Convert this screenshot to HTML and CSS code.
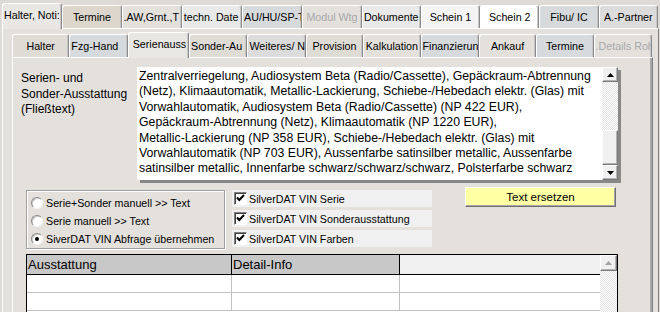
FILE: index.html
```html
<!DOCTYPE html>
<html lang="de">
<head>
<meta charset="UTF-8" />
<title>Fahrzeug - Serienausstattung</title>
<link rel="stylesheet" href="styles.css">
</head>
<body>
<div class="window">
    <div class="tabs tabs-main">
        <div class="tab active left">Halter, Noti:</div>
        <div class="tab tan">Termine</div>
        <div class="tab left">.AW,Grnt.,T</div>
        <div class="tab light left">techn. Date</div>
        <div class="tab blue left">AU/HU/SP-T</div>
        <div class="tab off">Modul Wtg</div>
        <div class="tab light">Dokumente</div>
        <div class="tab lighter">Schein 1</div>
        <div class="tab white">Schein 2</div>
        <div class="tab blue">Fibu/ IC</div>
        <div class="tab grey">A.-Partner</div>
    </div>
    <div class="page page-main">
        <div class="tabs tabs-sub">
            <div class="tab warm">Halter</div>
            <div class="tab blue left">Fzg-Hand</div>
            <div class="tab active left">Serienauss</div>
            <div class="tab warm left">Sonder-Au</div>
            <div class="tab grey left">Weiteres/ N</div>
            <div class="tab warm">Provision</div>
            <div class="tab">Kalkulation</div>
            <div class="tab blue left">Finanzierun</div>
            <div class="tab">Ankauf</div>
            <div class="tab blue">Termine</div>
            <div class="tab off left">.Details Roh</div>
        </div>
        <div class="page page-sub">
            <div class="memo-row">
                <div class="memo-label">Serien- und<br>Sonder-Ausstattung<br>(Fließtext)</div>
                <div class="memo">
                    <div class="memo-text">
                        Zentralverriegelung, Audiosystem Beta (Radio/Cassette), Gepäckraum-Abtrennung<br>
                        (Netz), Klimaautomatik, Metallic-Lackierung, Schiebe-/Hebedach elektr. (Glas) mit<br>
                        Vorwahlautomatik, Audiosystem Beta (Radio/Cassette) (NP 422 EUR),<br>
                        Gepäckraum-Abtrennung (Netz), Klimaautomatik (NP 1220 EUR),<br>
                        Metallic-Lackierung (NP 358 EUR), Schiebe-/Hebedach elektr. (Glas) mit<br>
                        Vorwahlautomatik (NP 703 EUR), Aussenfarbe satinsilber metallic, Aussenfarbe<br>
                        satinsilber metallic, Innenfarbe schwarz/schwarz/schwarz, Polsterfarbe schwarz
                    </div>
                    <div class="vscroll">
                        <div class="sb-btn"><svg width="7" height="4" viewBox="0 0 7 4"><polygon points="0,4 7,4 3.5,0" fill="#000"/></svg></div>
                        <div class="sb-track"></div>
                        <div class="sb-thumb"></div>
                        <div class="sb-btn"><svg width="7" height="4" viewBox="0 0 7 4"><polygon points="0,0 7,0 3.5,4" fill="#000"/></svg></div>
                    </div>
                </div>
            </div>

            <div class="options-row">
                <div class="radio-group">
                    <div class="radio"><span class="radio-circle"></span>Serie+Sonder manuell &gt;&gt; Text</div>
                    <div class="radio"><span class="radio-circle"></span>Serie manuell &gt;&gt; Text</div>
                    <div class="radio"><span class="radio-circle checked"></span>SiverDAT VIN Abfrage übernehmen</div>
                </div>
                <div class="checks">
                    <div class="check"><span class="check-box"><svg width="9" height="9" viewBox="0 0 9 9"><polyline points="1,3.5 3.3,6 8,1" fill="none" stroke="#000" stroke-width="2"/></svg></span>SilverDAT VIN Serie</div>
                    <div class="check"><span class="check-box"><svg width="9" height="9" viewBox="0 0 9 9"><polyline points="1,3.5 3.3,6 8,1" fill="none" stroke="#000" stroke-width="2"/></svg></span>SilverDAT VIN Sonderausstattung</div>
                    <div class="check"><span class="check-box"><svg width="9" height="9" viewBox="0 0 9 9"><polyline points="1,3.5 3.3,6 8,1" fill="none" stroke="#000" stroke-width="2"/></svg></span>SilverDAT VIN Farben</div>
                </div>
                <button class="btn-replace">Text ersetzen</button>
            </div>

            <div class="grid">
                <div class="grid-body">
                    <div class="grid-row grid-head">
                        <div class="cell c1">Ausstattung</div>
                        <div class="cell c2">Detail-Info</div>
                        <div class="cell c3"></div>
                    </div>
                    <div class="grid-row">
                        <div class="cell c1"></div>
                        <div class="cell c2"></div>
                        <div class="cell c3"></div>
                    </div>
                    <div class="grid-row">
                        <div class="cell c1"></div>
                        <div class="cell c2"></div>
                        <div class="cell c3"></div>
                    </div>
                </div>
                <div class="vscroll grid-scroll">
                    <div class="sb-btn"><svg width="7" height="4" viewBox="0 0 7 4"><polygon points="0,4 7,4 3.5,0" fill="#a0a0a0"/></svg></div>
                    <div class="sb-track"></div>
                </div>
            </div>
        </div>
    </div>
</div>
</body>
</html>
```

FILE: styles.css
```css
* {
    box-sizing: border-box;
}
html, body {
    margin: 0;
    height: 100%;
    overflow: hidden;
}
body {
    background: #dedbd6;
    font-family: "Liberation Sans", Arial, sans-serif;
    font-size: 10.7px;
    color: #000;
}
.window {
    width: 660px;
    height: 312px;
    padding: 3px 0 0 2px;
    overflow: hidden;
}

/* tab strips */
.tabs {
    display: flex;
    align-items: flex-end;
    height: 25px;
}
.tabs-main {
    width: 656px;
}
.tabs-main .tab {
    padding-bottom: 1px;
}
.tabs-sub {
    width: 640px;
}
.tab {
    flex: 1 1 0;
    min-width: 0;
    height: 23px;
    display: flex;
    align-items: center;
    justify-content: center;
    white-space: nowrap;
    overflow: hidden;
    background: #e4e1dd;
    border: 1px solid #fff;
    border-bottom: 0;
    border-right-color: #8a8a8a;
    border-radius: 3px 3px 0 0;
    box-shadow: inset -1px 0 #c6c6c6;
}
.tab.left {
    justify-content: flex-start;
    padding-left: 1px;
}
.tab.active {
    position: relative;
    z-index: 1;
    height: 26px;
    margin-bottom: -1px;
    background: #e9e7e4;
    padding-bottom: 3px;
}
.tabs-sub .tab.active {
    padding-left: 4px;
    padding-bottom: 4px;
}
.tab.tan { background: #ddd6cc; }
.tab.light { background: #e9e9e9; }
.tab.lighter { background: #f4f4f4; }
.tab.white { background: #fff; }
.tab.blue { background: #d6dadd; }
.tab.grey { background: #dcdcdc; }
.tab.warm { background: #dfdbd5; }
.tab.off { color: #a8a8a8; }

/* pages */
.page {
    background: #e4e1dd;
    border-top: 1px solid #fff;
    border-left: 1px solid #fff;
    border-right: 1px solid #808080;
}
.page-main {
    width: 657px;
    height: 290px;
    padding: 3px 0 0 9px;
}
.page-sub {
    width: 641px;
    height: 260px;
    padding: 9px 0 0 8px;
    box-shadow: inset -2px 0 #a8a8a8;
}

/* memo */
.memo-row {
    display: flex;
}
.memo-label {
    width: 116px;
    padding-top: 4px;
    font-size: 12px;
    line-height: 15.5px;
}
.memo {
    display: flex;
    width: 481px;
    height: 113px;
    background: #fff;
    box-shadow: 3px 3px 0 #888;
}
.memo-text {
    flex: 1;
    padding: 2px 2px;
    font-size: 12.3px;
    line-height: 15.4px;
    white-space: nowrap;
    overflow: hidden;
}

/* scrollbars */
.vscroll {
    width: 16px;
    display: flex;
    flex-direction: column;
}
.sb-btn, .sb-thumb {
    background: #f0f0f0;
    border: 1px solid;
    border-color: #fff #7a7a7a #7a7a7a #fff;
    box-shadow: inset -1px -1px #b4b4b4;
}
.sb-btn {
    height: 15px;
    display: flex;
    align-items: center;
    justify-content: center;
}
.sb-btn svg {
    display: block;
}
.sb-thumb {
    height: 35px;
}
.sb-track {
    flex: 1;
    background: repeating-conic-gradient(#e4e4e4 0 25%, #fff 0 50%) 0 0 / 2px 2px;
}

/* options */
.options-row {
    display: flex;
    align-items: flex-start;
    margin: 7px 0 0 5px;
}
.radio-group {
    width: 199px;
    height: 59px;
    margin-top: 3px;
    padding: 3px 0 0 4px;
    border: 1px solid #a0a0a0;
    box-shadow: inset 1px 1px #fff, 1px 1px #fff;
    display: flex;
    flex-direction: column;
}
.radio {
    height: 18px;
    display: flex;
    align-items: center;
    gap: 3px;
}
.radio-circle {
    width: 12px;
    height: 12px;
    border-radius: 50%;
    background: #fff;
    border: 1px solid;
    border-color: #8a8a8a #f4f4f4 #f4f4f4 #8a8a8a;
    box-shadow: inset 1px 1px #cfcfcf;
    display: flex;
    align-items: center;
    justify-content: center;
}
.radio-circle.checked::after {
    content: "";
    width: 4px;
    height: 4px;
    border-radius: 50%;
    background: #000;
}
.checks {
    width: 200px;
    margin: 3px 0 0 7px;
    display: flex;
    flex-direction: column;
    gap: 3px;
}
.check {
    height: 17px;
    padding-left: 2px;
    background: #f0f0f0;
    display: flex;
    align-items: center;
    gap: 2px;
}
.check-box {
    width: 13px;
    height: 13px;
    background: #fff;
    border: 1px solid;
    border-color: #808080 #fff #fff #808080;
    box-shadow: inset 1px 1px #404040;
    display: flex;
    align-items: center;
    justify-content: center;
}
.check-box svg {
    display: block;
}
.btn-replace {
    width: 151px;
    height: 20px;
    margin-left: 33px;
    padding: 0;
    background: #ffffa4;
    border: 1px solid;
    border-color: #fff #6e6e6e #6e6e6e #fff;
    box-shadow: inset -1px -1px #a8a8a8;
    font-family: "Liberation Sans", Arial, sans-serif;
    font-size: 11.5px;
    color: #000;
}

/* grid */
.grid {
    display: flex;
    width: 592px;
    height: 70px;
    margin: 5px 0 0 5px;
    border: 1px solid #000;
    border-bottom: 0;
}
.grid-body {
    width: 573px;
    background: #fff;
}
.grid-row {
    display: flex;
    height: 18px;
    border-bottom: 1px solid #c0c0c0;
}
.grid-head {
    height: 20px;
    border-bottom-color: #000;
    font-size: 13px;
    line-height: 19px;
}
.cell {
    padding-left: 1px;
    border-right: 1px solid #c0c0c0;
}
.c1 { width: 205px; }
.c2 { width: 168px; }
.c3 { flex: 1; border-right: 0; }
.grid-head .cell {
    background: #c8c8c8;
    border-right-color: #000;
}
.grid-head .c3 {
    background: #f0f0f0;
}
.grid-scroll {
    width: 17px;
}
.grid-scroll .sb-btn {
    height: 16px;
}
```
